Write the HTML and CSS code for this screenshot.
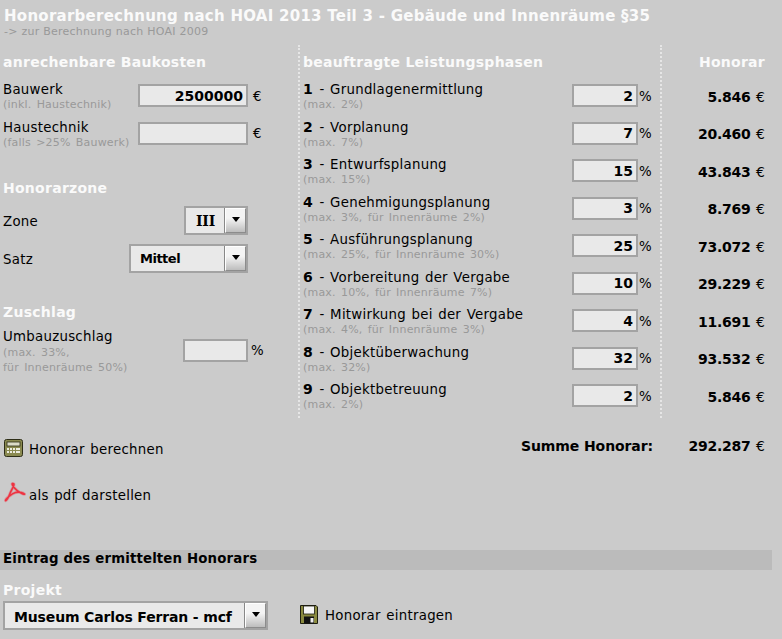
FILE: index.html
```html
<!DOCTYPE html>
<html lang="de">
<head>
<meta charset="utf-8">
<title>Honorarberechnung</title>
<link rel="stylesheet" href="styles.css">
</head>
<body>
<header class="head">
  <h1 class="title">Honorarberechnung nach HOAI 2013 Teil 3 - Gebäude und Innenräume §35</h1>
  <a class="back">-&gt; zur Berechnung nach HOAI 2009</a>
</header>
<main class="columns">
  <section class="col-left">
    <h2 class="h h-first">anrechenbare Baukosten</h2>
    <div class="lrow r1">
      <div class="ltext"><div>Bauwerk</div><small>(inkl. Haustechnik)</small></div>
      <input class="inp w110" value="2500000"><span class="unit-e">€</span>
    </div>
    <div class="lrow r2">
      <div class="ltext"><div>Haustechnik</div><small>(falls &gt;25% Bauwerk)</small></div>
      <input class="inp w110" value=""><span class="unit-e">€</span>
    </div>
    <h2 class="h h-zone">Honorarzone</h2>
    <div class="srow">
      <span class="slabel">Zone</span>
      <div class="sel w64 center"><span class="sel-val">III</span><span class="sel-btn"><i class="tri"></i></span></div>
    </div>
    <div class="srow">
      <span class="slabel">Satz</span>
      <div class="sel w119"><span class="sel-val val-mittel">Mittel</span><span class="sel-btn"><i class="tri"></i></span></div>
    </div>
    <h2 class="h h-zu">Zuschlag</h2>
    <div class="lrow r3">
      <div class="ltext"><div>Umbauzuschlag</div><small>(max. 33%,<br>für Innenräume 50%)</small></div>
      <input class="inp w65" value=""><span class="unit-p">%</span>
    </div>
  </section>
  <section class="col-mid">
    <h2 class="h h-first">beauftragte Leistungsphasen</h2>
    <div class="phase"><div class="ptext"><div><b>1</b> - Grundlagenermittlung</div><small>(max. 2%)</small></div><input class="inp w66" value="2"><span class="unit-m">%</span></div>
    <div class="phase"><div class="ptext"><div><b>2</b> - Vorplanung</div><small>(max. 7%)</small></div><input class="inp w66" value="7"><span class="unit-m">%</span></div>
    <div class="phase"><div class="ptext"><div><b>3</b> - Entwurfsplanung</div><small>(max. 15%)</small></div><input class="inp w66" value="15"><span class="unit-m">%</span></div>
    <div class="phase"><div class="ptext"><div><b>4</b> - Genehmigungsplanung</div><small>(max. 3%, für Innenräume 2%)</small></div><input class="inp w66" value="3"><span class="unit-m">%</span></div>
    <div class="phase"><div class="ptext"><div><b>5</b> - Ausführungsplanung</div><small>(max. 25%, für Innenräume 30%)</small></div><input class="inp w66" value="25"><span class="unit-m">%</span></div>
    <div class="phase"><div class="ptext"><div><b>6</b> - Vorbereitung der Vergabe</div><small>(max. 10%, für Innenräume 7%)</small></div><input class="inp w66" value="10"><span class="unit-m">%</span></div>
    <div class="phase"><div class="ptext"><div><b>7</b> - Mitwirkung bei der Vergabe</div><small>(max. 4%, für Innenräume 3%)</small></div><input class="inp w66" value="4"><span class="unit-m">%</span></div>
    <div class="phase"><div class="ptext"><div><b>8</b> - Objektüberwachung</div><small>(max. 32%)</small></div><input class="inp w66" value="32"><span class="unit-m">%</span></div>
    <div class="phase"><div class="ptext"><div><b>9</b> - Objektbetreuung</div><small>(max. 2%)</small></div><input class="inp w66" value="2"><span class="unit-m">%</span></div>
  </section>
  <section class="col-right">
    <h2 class="h h-first h-right">Honorar</h2>
    <div class="amt">5.846 <span>€</span></div>
    <div class="amt">20.460 <span>€</span></div>
    <div class="amt">43.843 <span>€</span></div>
    <div class="amt">8.769 <span>€</span></div>
    <div class="amt">73.072 <span>€</span></div>
    <div class="amt">29.229 <span>€</span></div>
    <div class="amt">11.691 <span>€</span></div>
    <div class="amt">93.532 <span>€</span></div>
    <div class="amt">5.846 <span>€</span></div>
  </section>
</main>
<div class="actions">
  <div class="action-left">
    <a class="act act-calc">
      <svg class="ic" width="19" height="18" viewBox="0 0 19 18"><rect x=".5" y=".5" width="18" height="17" rx="2" fill="#8a8a50" stroke="#2e2e18"/><rect x="3" y="3" width="13" height="4" fill="#dcdcc8" stroke="#2e2e18" stroke-width=".8"/><g fill="#ecece0"><rect x="3" y="9" width="2" height="2"/><rect x="6" y="9" width="2" height="2"/><rect x="9" y="9" width="2" height="2"/><rect x="12" y="9" width="4" height="2"/><rect x="3" y="12" width="2" height="2"/><rect x="6" y="12" width="2" height="2"/><rect x="9" y="12" width="2" height="2"/><rect x="12" y="12" width="4" height="2"/></g></svg>
      <span class="act-t1">Honorar berechnen</span>
    </a>
    <a class="act act-pdf">
      <svg class="ic-pdf" width="22" height="22" viewBox="0 0 22 22"><path class="pdf-halo" d="M9 1.500c3 0-2 7-3 10s-4 8-4.500 7 6-7 10-8 8 .5 9 1.500-6-1-10-6S8.500 1.500 9.500 1.500"/><path class="pdf-line" d="M9 1.500c3 0-2 7-3 10s-4 8-4.500 7 6-7 10-8 8 .5 9 1.500-6-1-10-6S8.500 1.500 9.500 1.500"/></svg>
      <span class="act-t2">als pdf darstellen</span>
    </a>
  </div>
  <div class="sum"><b class="sum-label">Summe Honorar:</b><b class="sum-val">292.287 <span>€</span></b></div>
</div>
<div class="bar">Eintrag des ermittelten Honorars</div>
<h2 class="h h-proj">Projekt</h2>
<div class="proj">
  <div class="sel w265"><span class="sel-val">Museum Carlos Ferran - mcf</span><span class="sel-btn"><i class="tri"></i></span></div>
  <a class="act act-save">
    <svg width="18" height="19" viewBox="0 0 18 19"><path d="M.5.5h15.500l1.500 1.500v16.500H.5z" fill="#8a8a40" stroke="#1e1e10"/><rect x="3.500" y="1" width="11" height="8" fill="#f6f6f6" stroke="#1e1e10" stroke-width=".8"/><rect x="4" y="11.500" width="10" height="7" fill="#111"/><rect x="10.500" y="13" width="3" height="4.500" fill="#eee"/></svg>
    <span class="act-t3">Honorar eintragen</span>
  </a>
</div>
</body>
</html>
```

FILE: styles.css
```css
* { box-sizing: border-box; }
html, body { margin: 0; padding: 0; }
body {
  width: 782px;
  height: 639px;
  overflow: hidden;
  background: #cbcbcb;
  color: #000;
  font-family: "DejaVu Sans", Verdana, sans-serif;
  font-size: 13.33px;
  letter-spacing: .27px;
  word-spacing: 1px;
  line-height: 16px;
}
small { display: block; font-size: 11px; line-height: 13px; color: #999; letter-spacing: .2px; word-spacing: 1.500px; }
b { font-weight: bold; font-size: 14px; line-height: 1; }
.head { padding: 8px 0 0 4px; height: 45px; }
.title { margin: 0; font-size: 15px; line-height: 17px; font-weight: bold; color: #fafafa; letter-spacing: .26px; word-spacing: 0; white-space: nowrap; }
.back { display: block; font-size: 11px; line-height: 13px; color: #999; letter-spacing: .25px; word-spacing: 0; }

.columns { display: flex; height: 373px; }
.col-left { width: 298px; padding-left: 3px; }
.col-mid { width: 364px; padding-left: 3px; border-left: 2px dotted #e6e6e6; border-right: 2px dotted #e6e6e6; }
.col-right { width: 103px; }

.h { margin: 0; font-size: 14px; line-height: 17px; font-weight: bold; color: #fafafa; letter-spacing: .27px; word-spacing: 0; }
.h-first { margin-top: 9px; margin-bottom: 6px; }
.h-right { text-align: right; }
.h-zone { margin-top: 28px; margin-bottom: 4px; }
.h-zu { margin-top: 27px; margin-bottom: 8px; }

.inp {
  display: block;
  height: 23px;
  padding: 0 3px;
  border: 2px solid #a3a3a3;
  border-radius: 0;
  outline: 0;
  background: #e9e9e9;
  color: #000;
  font: bold 14px "DejaVu Sans", sans-serif;
  text-align: right;
}
.w110 { width: 110px; }
.w65 { width: 65px; }
.w66 { width: 66px; }

.lrow { display: flex; align-items: center; }
.lrow .ltext { width: 135px; padding-top: 2px; }
.r1, .r2 { height: 37.5px; }
.r3 { align-items: flex-start; }
.r3 .ltext { width: 180px; padding-top: 0; }
.r3 small { line-height: 15px; }
.r3 .inp { margin-top: 10px; }
.r3 .unit-p { margin-top: 14px; }
.unit-e { margin-left: 5px; padding-top: 2px; }
.unit-p { margin-left: 3px; }
.srow { display: flex; justify-content: space-between; align-items: center; width: 245px; height: 38px; }
.slabel { padding-top: 3px; }

.sel {
  display: flex;
  height: 29px;
  border: 2px solid #a3a3a3;
  background: #e9e9e9;
  font-weight: bold;
  font-size: 14px;
  letter-spacing: -.15px;
  word-spacing: 0;
  align-items: stretch;
}
.w64 { width: 64px; font-family: "DejaVu Serif", serif; }
.w119 { width: 119px; }
.w265 { width: 265px; }
.sel-val { flex: 1; align-self: center; padding: 2px 0 0 9px; white-space: nowrap; }
.val-mittel { font-size: 13px; letter-spacing: -.5px; padding-top: 1px; }
.center .sel-val { padding: 2px 0 0; text-align: center; }
.sel-btn {
  width: 21px;
  display: flex;
  justify-content: center;
  padding-top: 8px;
  border: 1px solid #fff;
  border-right-color: #8c8c8c;
  border-bottom-color: #8c8c8c;
  box-shadow: -1px 0 0 #888;
  background: linear-gradient(#f4f4f4 40%, #bdbdbd);
}
.tri { width: 0; height: 0; border: 4.500px solid transparent; border-top: 5px solid #000; border-bottom: 0; }

.phase { display: flex; align-items: center; height: 37.5px; }
.ptext { width: 269px; padding-top: 2px; }
.ptext b { margin-right: 1px; }
.unit-m { margin-left: 1px; padding-top: 2px; }

.amt {
  height: 37.5px;
  display: flex;
  align-items: center;
  justify-content: flex-end;
  padding-top: 2px;
  font: bold 14px "DejaVu Sans", sans-serif;
  letter-spacing: -.25px;
  white-space: pre;
}
.amt span, .sum-val span { font: 14px "DejaVu Sans", sans-serif; letter-spacing: 0; }

.actions { display: flex; justify-content: space-between; align-items: flex-start; width: 765px; height: 132px; padding-left: 4px; }
.act { display: flex; align-items: flex-start; }
.act-calc { margin-top: 21px; gap: 6px; }
.act-t1 { margin-top: 3px; }
.act-pdf { margin-top: 24px; gap: 3px; }
.act-t2 { margin-top: 6px; }
.ic, .ic-pdf { flex: none; }
.pdf-halo, .pdf-line { fill: none; stroke: #ee3341; }
.pdf-halo { stroke-width: 3; opacity: .3; }
.pdf-line { stroke-width: 1.600; }
.sum { display: flex; margin-top: 20px; }
.sum-label { width: 132px; font-size: 14px; line-height: 16px; letter-spacing: -.1px; word-spacing: 0; white-space: nowrap; }
.sum-val { width: 112px; text-align: right; font: bold 14px/16px "DejaVu Sans", sans-serif; letter-spacing: -.25px; white-space: pre; }

.bar { width: 772px; height: 20px; padding-left: 3px; background: #bbb; font-weight: bold; line-height: 18px; letter-spacing: .15px; word-spacing: 0; }
.h-proj { margin: 12px 0 2px 3px; }
.proj { display: flex; align-items: center; padding-left: 3px; }
.act-save { margin: 0 0 2px 32px; gap: 7px; }
.act-t3 { margin-top: 3px; }
```
